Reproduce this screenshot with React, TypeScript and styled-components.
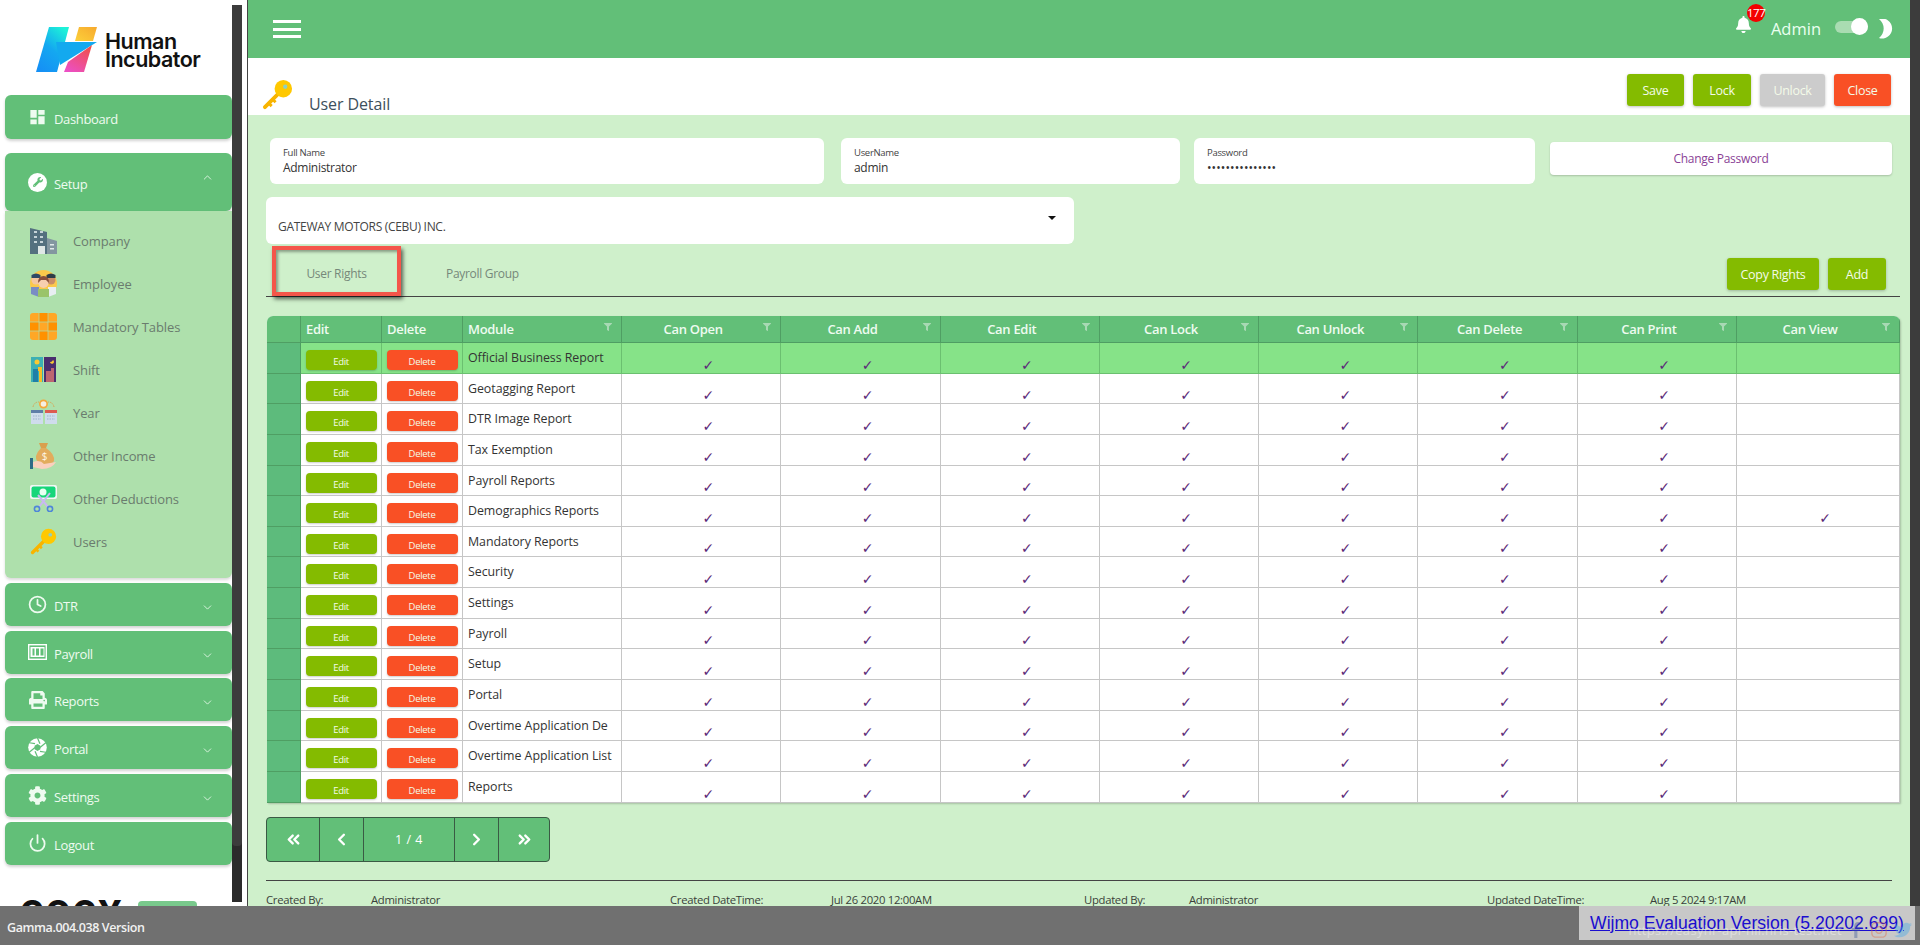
import * as React from 'react'
import styled, { createGlobalStyle } from 'styled-components'
import { MdDashboard } from 'react-icons/md'
import { FaWrench, FaPrint, FaCog, FaBell, FaFilter, FaFacebookF, FaInstagram, FaTwitter } from 'react-icons/fa'
import { ChevronDown, ChevronUp, Clock, Power, ChevronsLeft, ChevronsRight, ChevronLeft, ChevronRight } from 'lucide-react'

const GREEN = '#62bf78'
const LIME = '#84bb00'
const ORANGE = '#f95025'
const PALE = '#cff0cb'

const GlobalStyle = createGlobalStyle`
  html, body { margin: 0; padding: 0; height: 100%; overflow: hidden; background: #fff; }
  * { box-sizing: border-box; }
  body { font-family: "Open Sans", "Noto Sans", sans-serif; letter-spacing: -0.3px; }
`

const Page = styled.div`
  display: flex;
  width: 1920px;
  height: 945px;
  overflow: hidden;
`

const Sidebar = styled.aside`
  width: 248px;
  height: 906px;
  display: flex;
  flex: none;
  border-right: 1px solid #444;
  background: #fff;
`

const SideNav = styled.nav`
  width: 232px;
  padding-left: 5px;
  overflow: hidden;
`

const SideScroll = styled.div`
  width: 10px;
  height: 897px;
  margin-top: 5px;
  background: #2b2b2b;
`

const SideThumb = styled.div`
  height: 841px;
  background: #3c3c3c;
  border-radius: 0 0 4px 4px;
`

const LogoBlock = styled.div`
  height: 95px;
  display: flex;
  padding: 27px 0 0 30px;
  gap: 8px;
`

const LogoText = styled.div`
  font-family: Inter, "Open Sans", sans-serif;
  font-weight: 600;
  font-size: 21.5px;
  line-height: 18px;
  letter-spacing: -0.5px;
  color: #111;
  padding-top: 5px;
`

const MenuButton = styled.div<{ $h?: number; $mt?: number }>`
  height: ${({ $h }) => $h ?? 43}px;
  margin-top: ${({ $mt }) => $mt ?? 4.8}px;
  background: ${GREEN};
  border-radius: 6px;
  box-shadow: 0 2px 3px rgba(0, 0, 0, 0.18);
  color: #eefbf0;
  display: flex;
  align-items: center;
  padding: 0 18px 0 23px;
  font-size: 13px;
  letter-spacing: -0.35px;
`

const MenuIcon = styled.span`
  width: 19px;
  height: 19px;
  margin-right: 7px;
  display: flex;
  align-items: center;
  justify-content: center;
  flex: none;
`

const MenuLabel = styled.span`
  flex: 1;
  padding-top: 3px;
`

const ChevronWrap = styled.span<{ $shift: number }>`
  display: flex;
  margin-top: ${({ $shift }) => $shift}px;
`

const WrenchDisc = styled.span`
  width: 19px;
  height: 19px;
  border-radius: 50%;
  background: #fff;
  color: ${GREEN};
  display: flex;
  align-items: center;
  justify-content: center;
`

const SubMenu = styled.div`
  height: 367px;
  padding-top: 8px;
  background: #aee0ac;
  border-radius: 0 0 6px 6px;
  box-shadow: 0 2px 3px rgba(0, 0, 0, 0.15);
`

const SubItem = styled.div`
  height: 43px;
  display: flex;
  align-items: center;
  padding-left: 25px;
  font-size: 13px;
  letter-spacing: -0.1px;
  color: #6a7c6e;
`

const SubIcon = styled.span`
  width: 27px;
  height: 27px;
  margin-right: 16px;
  display: flex;
`

const Cutoff = styled.div`
  margin-top: 36px;
  margin-left: 15px;
  display: flex;
  align-items: flex-start;
`

const CutoffText = styled.span`
  width: 118px;
  font-family: Inter, sans-serif;
  font-weight: 800;
  font-size: 32px;
  line-height: 23px;
  letter-spacing: 2px;
  color: #111;
`

const CutoffPill = styled.span`
  width: 59px;
  height: 24px;
  border-radius: 4px;
  background: #79c98c;
`

const Main = styled.main`
  width: 1662px;
  flex: none;
  height: 945px;
  background: ${PALE};
  overflow: hidden;
`

const TopBar = styled.header`
  height: 58px;
  background: ${GREEN};
  display: flex;
  align-items: center;
  justify-content: space-between;
  padding: 0 17px 0 25px;
`

const Burger = styled.div`
  width: 28px;
  height: 18px;
  display: flex;
  flex-direction: column;
  justify-content: space-between;
`

const BurgerLine = styled.span`
  height: 3px;
  background: #fff;
`

const TopRight = styled.div`
  display: flex;
  align-items: center;
  color: #eafff0;
`

const BellWrap = styled.span`
  position: relative;
  display: flex;
  margin-right: 19px;
  margin-top: -10px;
  color: #fff;
`

const Badge = styled.span`
  position: absolute;
  left: 12px;
  top: -12px;
  width: 18px;
  height: 18px;
  border-radius: 50%;
  background: #f40000;
  color: #fff;
  font-size: 11.5px;
  line-height: 18px;
  text-align: center;
  letter-spacing: -0.4px;
`

const AdminName = styled.span`
  font-size: 16.5px;
  letter-spacing: 0;
  margin-right: 14px;
  margin-top: -1px;
`

const Toggle = styled.span`
  position: relative;
  width: 33px;
  height: 12px;
  border-radius: 6px;
  background: #a9dcb2;
  margin-right: 9px;
  margin-top: -4px;
`

const ToggleKnob = styled.span`
  position: absolute;
  right: 0;
  top: -3px;
  width: 17px;
  height: 17px;
  border-radius: 50%;
  background: #fff;
`

const PageHead = styled.div`
  height: 57px;
  background: #fff;
  display: flex;
  justify-content: space-between;
  padding: 16px 19px 0 14px;
`

const PageTitle = styled.div`
  display: flex;
  align-items: flex-end;
  gap: 16px;
  height: 36px;
  font-size: 16px;
  color: #3d4f5c;
  letter-spacing: -0.1px;
`

const TitleText = styled.span`
  line-height: 23px;
  margin-bottom: -6px;
`

const ActionRow = styled.div`
  display: flex;
  gap: 9px;
`

const ActionButton = styled.div<{ $bg?: string; $w: number }>`
  width: ${({ $w }) => $w}px;
  height: 32px;
  border-radius: 3px;
  background: ${({ $bg }) => $bg ?? LIME};
  color: #f4fbe9;
  font-size: 12.5px;
  display: flex;
  align-items: center;
  justify-content: center;
  box-shadow: 0 1px 3px rgba(0, 0, 0, 0.25);
`

const Content = styled.div`
  padding: 23px 10px 0 18px;
`

const FieldRow = styled.div`
  display: flex;
  padding-left: 4px;
`

const Field = styled.div<{ $w: number; $ml?: number }>`
  width: ${({ $w }) => $w}px;
  height: 46px;
  margin-left: ${({ $ml }) => $ml ?? 0}px;
  background: #fff;
  border-radius: 6px;
  padding: 9px 13px 0;
`

const FieldLabel = styled.div`
  font-size: 9.5px;
  line-height: 12px;
  color: #444;
`

const FieldValue = styled.div<{ $dots?: boolean }>`
  font-size: 12px;
  line-height: 17px;
  letter-spacing: ${({ $dots }) => ($dots ? '0.1px' : '-0.3px')};
  color: #333;
`

const ChangePassword = styled.div`
  width: 342px;
  height: 33px;
  margin: 4px 0 0 15px;
  background: #fff;
  border-radius: 4px;
  box-shadow: 0 1px 2px rgba(0, 0, 0, 0.2);
  color: #8a3f96;
  font-size: 12px;
  display: flex;
  align-items: center;
  justify-content: center;
`

const SelectBox = styled.div`
  position: relative;
  width: 808px;
  height: 47px;
  margin-top: 13px;
  background: #fff;
  border-radius: 6px;
  display: flex;
  align-items: flex-end;
  padding: 0 12px 9px;
  font-size: 12px;
  color: #444;
`

const SelectArrow = styled.span`
  position: absolute;
  right: 18px;
  top: 19px;
  border-left: 4px solid transparent;
  border-right: 4px solid transparent;
  border-top: 4px solid #111;
`

const TabRow = styled.div`
  height: 53px;
  display: flex;
  border-bottom: 1px solid #444;
  padding: 2px 14px 0 6px;
`

const ActiveTab = styled.div`
  width: 129px;
  height: 50px;
  padding-top: 5px;
  border: 4px solid #f4564a;
  box-shadow: 2px 3px 4px rgba(0, 0, 0, 0.6), inset 2px 2px 3px rgba(0, 0, 0, 0.35);
  display: flex;
  align-items: center;
  justify-content: center;
  font-size: 12px;
  color: #76887a;
`

const PlainTab = styled.div`
  margin-left: 45px;
  height: 50px;
  padding-top: 5px;
  display: flex;
  align-items: center;
  font-size: 12px;
  color: #76887a;
`

const TabActions = styled.div`
  margin-left: auto;
  padding-top: 12px;
  display: flex;
  gap: 9px;
`

const Grid = styled.div`
  margin: 19px 0 0 1px;
  width: 1633px;
  border-radius: 6px 6px 0 0;
  overflow: hidden;
  background: #fff;
  box-shadow: 1px 1px 2px rgba(0, 0, 0, 0.2);
`

const gridColumns = '34px 81px 81px 159px repeat(7, 159.3px) 1fr'

const HeadRow = styled.div`
  display: grid;
  grid-template-columns: ${gridColumns};
  height: 27px;
  background: ${GREEN};
  border-bottom: 1px solid #4f9e63;
`

const HeadCell = styled.div<{ $center?: boolean }>`
  position: relative;
  display: flex;
  align-items: center;
  justify-content: ${({ $center }) => ($center ? 'center' : 'flex-start')};
  padding: ${({ $center }) => ($center ? '0 16px 0 0' : '0 0 0 5px')};
  border-right: 1px solid #4f9e63;
  font-size: 13px;
  font-weight: 600;
  color: #eefbf0;
`

const FilterMark = styled.span`
  position: absolute;
  right: 9px;
  top: 7px;
  display: flex;
  color: #a8d9b4;
`

const DataRow = styled.div<{ $selected?: boolean }>`
  display: grid;
  grid-template-columns: ${gridColumns};
  height: 30.65px;
  background: ${({ $selected }) => ($selected ? '#86e388' : '#fff')};
  color: #333;
`

const StubCell = styled.div`
  background: #5dbb7c;
  border-right: 1px solid #4f9e63;
  border-bottom: 1px solid #4f9e63;
`

const ButtonCell = styled.div<{ $selected?: boolean }>`
  display: flex;
  justify-content: center;
  padding-top: 7px;
  border-right: 1px solid ${({ $selected }) => ($selected ? '#6bc070' : '#c6c6c6')};
  border-bottom: 1px solid ${({ $selected }) => ($selected ? '#6bc070' : '#c6c6c6')};
`

const RowButton = styled.div<{ $bg: string }>`
  width: 71px;
  height: 20px;
  border-radius: 4px;
  background: ${({ $bg }) => $bg};
  color: #f4fbe9;
  font-size: 9.5px;
  line-height: 23px;
  text-align: center;
  box-shadow: 0 1px 2px rgba(0, 0, 0, 0.2);
`

const ModuleCell = styled.div<{ $selected?: boolean }>`
  padding: 5px 0 0 5px;
  font-size: 12.4px;
  line-height: 20px;
  letter-spacing: -0.05px;
  white-space: nowrap;
  overflow: hidden;
  border-right: 1px solid ${({ $selected }) => ($selected ? '#6bc070' : '#c6c6c6')};
  border-bottom: 1px solid ${({ $selected }) => ($selected ? '#6bc070' : '#c6c6c6')};
`

const CheckCell = styled.div<{ $selected?: boolean }>`
  display: flex;
  justify-content: center;
  align-items: flex-end;
  padding-left: 14px;
  font-family: "DejaVu Sans", sans-serif;
  font-size: 14px;
  line-height: 15px;
  color: #5b2a78;
  border-right: 1px solid ${({ $selected }) => ($selected ? '#6bc070' : '#c6c6c6')};
  border-bottom: 1px solid ${({ $selected }) => ($selected ? '#6bc070' : '#c6c6c6')};
`

const Pager = styled.div`
  margin-top: 14px;
  width: 284px;
  height: 45px;
  display: flex;
  background: ${GREEN};
  border: 1px solid #3a5a44;
  border-radius: 4px;
  color: #fff;
`

const PagerCell = styled.div<{ $w: number }>`
  width: ${({ $w }) => $w}px;
  display: flex;
  align-items: center;
  justify-content: center;
  font-size: 12.5px;
  letter-spacing: 0.5px;
  border-right: 1px solid #3a5a44;
  &:last-child { border-right: 0; }
`

const FooterRule = styled.div`
  margin-top: 18px;
  width: 1626px;
  border-top: 1px solid #444;
`

const AuditRow = styled.div`
  display: grid;
  grid-template-columns: 105px 299px 161px 253px 105px 298px 163px 1fr;
  padding-top: 11px;
  font-size: 11.3px;
  line-height: 16px;
  color: #3a3f3a;
`

const RightScroll = styled.div`
  width: 10px;
  flex: none;
  height: 945px;
  background: #3c3c3c;
`

const BottomBar = styled.footer`
  position: fixed;
  left: 0;
  right: 0;
  bottom: 0;
  height: 39px;
  background: #707070;
  color: #f2f2f2;
  display: flex;
  align-items: center;
  justify-content: space-between;
  padding: 3px 8px 0 7px;
  font-size: 12.5px;
  font-weight: 600;
  letter-spacing: -0.4px;
`

const SiteLinks = styled.div`
  position: relative;
  z-index: 1;
  display: flex;
  align-items: center;
  gap: 6px;
  font-weight: 400;
  font-size: 13px;
  letter-spacing: 0.3px;
  color: #fff;
  padding-top: 6px;
  opacity: 0.4;
`

const SocialRow = styled.span<{ $c: string }>`
  display: flex;
  color: ${({ $c }) => $c};
`

const WijmoTag = styled.a`
  position: absolute;
  left: 1579px;
  top: 0;
  width: 336px;
  height: 34px;
  background: #c8c8c8;
  color: #1a0dcf;
  font-family: "Liberation Sans", Arial, sans-serif;
  font-size: 17.6px;
  font-weight: 400;
  letter-spacing: 0;
  line-height: 34px;
  text-align: center;
  text-decoration: underline;
`

const KeyIcon = ({ size }: { size: number }) => (
  <svg width={size} height={size} viewBox="0 0 32 32">
    <path d="M19 13 L3 29" stroke="#f8b400" strokeWidth="4" strokeLinecap="round" />
    <path d="M7 25 l3 3 M11 21 l3 3" stroke="#f8b400" strokeWidth="3" />
    <circle cx="22" cy="10" r="9" fill="#ffc800" />
    <circle cx="24" cy="8" r="2.2" fill="#8fd0c0" />
  </svg>
)

const CompanyIcon = () => (
  <svg width="27" height="27" viewBox="0 0 27 27">
    <path d="M0 1 L17 5 V27 H0 Z" fill="#54707f" />
    <path d="M17 11 L27 14 V27 H17 Z" fill="#8396a0" />
    <rect x="8" y="19" width="7" height="8" fill="#dfe7e6" />
    {[4, 9, 14].map(y => (
      <g key={y} fill="#c6d3d8">
        <rect x="4" y={y} width="3" height="2" />
        <rect x="10" y={y} width="3" height="2" />
      </g>
    ))}
    <rect x="20" y="17" width="4" height="1.5" fill="#e2e9ea" />
    <rect x="20" y="21" width="4" height="1.5" fill="#e2e9ea" />
  </svg>
)

const EmployeeIcon = () => (
  <svg width="27" height="27" viewBox="0 0 27 27">
    <circle cx="13.5" cy="13.5" r="13.5" fill="#fbc94b" />
    <path d="M1 24 V17 H9 V27 Z" fill="#7a8cc4" />
    <path d="M18 27 V17 H26 V24 Z" fill="#e8eef2" />
    <circle cx="6" cy="10" r="4.5" fill="#f4c7a0" />
    <path d="M1.5 8 V5 Q6 2 10.5 5 V8 Z" fill="#2f4a66" />
    <circle cx="21" cy="10" r="4.5" fill="#c98d67" />
    <path d="M16.5 8 V5 Q21 2 25.5 5 V8 Z" fill="#2e3c48" />
    <path d="M8 27 V19 H19 V27 Z" fill="#9ac46a" />
    <circle cx="13.5" cy="13" r="5" fill="#f7cfb0" />
    <path d="M8 13 Q8 6 13.5 6 Q19 6 19 13 L16 10 H11 Z" fill="#8a4f3a" />
  </svg>
)

const TablesIcon = () => (
  <svg width="27" height="27" viewBox="0 0 27 27">
    <rect width="27" height="27" rx="3" fill="#ffa726" />
    <rect x="9" width="9" height="9" fill="#ff9100" />
    <rect y="9" width="9" height="9" fill="#ff9100" />
    <rect x="18" y="9" width="9" height="9" fill="#ff9100" />
    <rect x="9" y="18" width="9" height="9" fill="#ff9100" />
    <path d="M9 0 V27 M18 0 V27 M0 9 H27 M0 18 H27" stroke="#aee0ac" strokeWidth="0.7" />
  </svg>
)

const ShiftIcon = () => (
  <svg width="27" height="27" viewBox="0 0 27 27">
    <rect x="1" y="1" width="12" height="25" fill="#3cb0b4" />
    <rect x="14" y="1" width="12" height="25" fill="#4a2e6e" />
    <circle cx="7" cy="6" r="2.5" fill="#f9c932" />
    <path d="M20 6 a2 2 0 1 0 3 -2 a3 3 0 0 1 -3 2 Z" fill="#f9c932" />
    <rect x="3" y="13" width="5" height="13" fill="#1f7fa8" />
    <path d="M8 11 H12 V26 H9 V15 H8 Z" fill="#f6bd27" />
    <path d="M16 26 V15 H21 V12 H24 V26 Z" fill="#bd6670" />
  </svg>
)

const YearIcon = () => (
  <svg width="27" height="27" viewBox="0 0 27 27">
    <path d="M3 8 Q4 3 9 3 M24 8 Q23 3 18 3" fill="none" stroke="#d8a555" strokeDasharray="1.5 1" />
    <circle cx="13.5" cy="5" r="4.5" fill="#f3a93c" />
    <circle cx="13.5" cy="5" r="2.8" fill="#f6efe2" />
    <rect x="1" y="11" width="12" height="14" fill="#cfdcec" />
    <rect x="1" y="11" width="12" height="3" fill="#5f7ea8" />
    <rect x="15" y="11" width="12" height="14" fill="#cfdcec" />
    <rect x="15" y="11" width="12" height="3" fill="#dd5a50" />
    <path d="M3 17 H11 M3 20 H11 M17 17 H25 M17 20 H25" stroke="#9fb3cc" strokeDasharray="1.5 1" />
  </svg>
)

const IncomeIcon = () => (
  <svg width="27" height="27" viewBox="0 0 27 27">
    <path d="M9 1 H18 L16 6 H11 Z" fill="#d9a04e" />
    <path d="M11 6 H16 Q25 12 24 19 Q22 23 13 22 Q5 20 6 14 Q7 10 11 6 Z" fill="#e2ac5d" />
    <text x="14.5" y="18" textAnchor="middle" fontSize="10" fill="#fff6e6" fontFamily="Open Sans">$</text>
    <path d="M3 20 Q10 17 14 22 L26 20 Q22 27 12 27 L3 25 Z" fill="#fbd0be" />
    <rect x="0" y="16" width="3" height="11" fill="#2f6b86" />
  </svg>
)

const DeductionIcon = () => (
  <svg width="27" height="27" viewBox="0 0 27 27">
    <rect x="0" y="0" width="27" height="14" rx="2" fill="#f3f7f6" />
    <rect x="1.5" y="1.5" width="24" height="11" rx="2" fill="#17d67a" />
    <circle cx="13" cy="7" r="3.5" fill="#e8fff3" />
    <path d="M20 8 L9 22 M8 10 L18 22" stroke="#c9b8f2" strokeWidth="2" />
    <circle cx="7" cy="24" r="2.6" fill="none" stroke="#4f86d8" strokeWidth="1.6" />
    <circle cx="20" cy="24" r="2.6" fill="none" stroke="#4f86d8" strokeWidth="1.6" />
  </svg>
)

const BanknoteIcon = () => (
  <svg width="19" height="16" viewBox="0 0 19 16">
    <rect x="0.7" y="0.7" width="17.6" height="14.6" fill="none" stroke="#fff" strokeWidth="1.4" />
    <rect x="2.5" y="3" width="14" height="10" fill="#fff" />
    <rect x="4.5" y="4.5" width="2" height="7" fill={GREEN} />
    <rect x="8" y="4.5" width="3" height="7" fill={GREEN} />
    <rect x="12.5" y="4.5" width="3" height="7" fill={GREEN} />
  </svg>
)

const ApertureIcon = () => (
  <svg width="19" height="19" viewBox="0 0 20 20">
    <circle cx="10" cy="10" r="9.8" fill="#fff" />
    <path d="M10 0 L12.6 6 M18.7 5 L12.6 10 M18.7 15 L12.6 14 M10 20 L7.4 14 M1.3 15 L7.4 10 M1.3 5 L7.4 6" stroke={GREEN} strokeWidth="1.3" />
    <path d="M10 6.4 L13.1 8.2 V11.8 L10 13.6 L6.9 11.8 V8.2 Z" fill={GREEN} />
  </svg>
)

const HumanLogo = () => (
  <svg width="62" height="46" viewBox="0 0 62 46">
    <defs>
      <linearGradient id="logoBlue" x1="0.8" y1="0" x2="0.2" y2="1">
        <stop offset="0" stopColor="#1df3d8" />
        <stop offset="0.5" stopColor="#14a8f0" />
        <stop offset="1" stopColor="#1590f5" />
      </linearGradient>
      <linearGradient id="logoPink" x1="0.8" y1="0" x2="0.2" y2="1">
        <stop offset="0" stopColor="#f0504a" />
        <stop offset="1" stopColor="#ec4fc4" />
      </linearGradient>
      <linearGradient id="logoGold" x1="1" y1="0" x2="0" y2="1">
        <stop offset="0" stopColor="#f7a92e" />
        <stop offset="1" stopColor="#fcd13a" />
      </linearGradient>
    </defs>
    <path d="M14 0 H34 L22 45 H1 Z" fill="url(#logoBlue)" />
    <path d="M21 15 H62 L25 38 Z" fill="#13a9ef" />
    <path d="M44 0 H62 L58 14 H40 Z" fill="url(#logoGold)" />
    <path d="M57 18 L49 45 H29 L33 35 Z" fill="url(#logoPink)" />
  </svg>
)

const MoonIcon = () => (
  <svg width="16" height="20" viewBox="0 0 16 20">
    <path d="M2 0 A10 10 0 1 1 2 19 A12 12 0 0 0 2 0 Z" fill="#fff" />
  </svg>
)

const subItems: [string, React.ReactNode][] = [
  ['Company', <CompanyIcon />],
  ['Employee', <EmployeeIcon />],
  ['Mandatory Tables', <TablesIcon />],
  ['Shift', <ShiftIcon />],
  ['Year', <YearIcon />],
  ['Other Income', <IncomeIcon />],
  ['Other Deductions', <DeductionIcon />],
  ['Users', <KeyIcon size={27} />],
]

const menuItems: [string, React.ReactNode][] = [
  ['DTR', <Clock size={19} strokeWidth={2.2} />],
  ['Payroll', <BanknoteIcon />],
  ['Reports', <FaPrint size={18} />],
  ['Portal', <ApertureIcon />],
  ['Settings', <FaCog size={19} />],
]

const modules = [
  'Official Business Report',
  'Geotagging Report',
  'DTR Image Report',
  'Tax Exemption',
  'Payroll Reports',
  'Demographics Reports',
  'Mandatory Reports',
  'Security',
  'Settings',
  'Payroll',
  'Setup',
  'Portal',
  'Overtime Application De',
  'Overtime Application List',
  'Reports',
]

const rights = ['Can Open', 'Can Add', 'Can Edit', 'Can Lock', 'Can Unlock', 'Can Delete', 'Can Print', 'Can View']

const App = () => (
  <Page>
    <GlobalStyle />
    <Sidebar>
      <SideNav>
        <LogoBlock>
          <HumanLogo />
          <LogoText>Human<br />Incubator</LogoText>
        </LogoBlock>
        <MenuButton $h={44} $mt={0}>
          <MenuIcon><MdDashboard size={24} /></MenuIcon>
          <MenuLabel>Dashboard</MenuLabel>
        </MenuButton>
        <MenuButton $h={58} $mt={14}>
          <MenuIcon><WrenchDisc><FaWrench size={10} /></WrenchDisc></MenuIcon>
          <MenuLabel>Setup</MenuLabel>
          <ChevronWrap $shift={-10}><ChevronUp size={13} strokeWidth={1.5} /></ChevronWrap>
        </MenuButton>
        <SubMenu>
          {subItems.map(([label, icon]) => (
            <SubItem key={label}>
              <SubIcon>{icon}</SubIcon>
              {label}
            </SubItem>
          ))}
        </SubMenu>
        {menuItems.map(([label, icon]) => (
          <MenuButton key={label}>
            <MenuIcon>{icon}</MenuIcon>
            <MenuLabel>{label}</MenuLabel>
            <ChevronWrap $shift={6}><ChevronDown size={13} strokeWidth={1.5} /></ChevronWrap>
          </MenuButton>
        ))}
        <MenuButton>
          <MenuIcon><Power size={20} strokeWidth={2.2} /></MenuIcon>
          <MenuLabel>Logout</MenuLabel>
        </MenuButton>
        <Cutoff>
          <CutoffText>COGY</CutoffText>
          <CutoffPill />
        </Cutoff>
      </SideNav>
      <SideScroll><SideThumb /></SideScroll>
    </Sidebar>

    <Main>
      <TopBar>
        <Burger><BurgerLine /><BurgerLine /><BurgerLine /></Burger>
        <TopRight>
          <BellWrap>
            <FaBell size={17} />
            <Badge>177</Badge>
          </BellWrap>
          <AdminName>Admin</AdminName>
          <Toggle><ToggleKnob /></Toggle>
          <MoonIcon />
        </TopRight>
      </TopBar>

      <PageHead>
        <PageTitle>
          <KeyIcon size={31} />
          <TitleText>User Detail</TitleText>
        </PageTitle>
        <ActionRow>
          <ActionButton $w={57}>Save</ActionButton>
          <ActionButton $w={58}>Lock</ActionButton>
          <ActionButton $w={65} $bg="#cccccc">Unlock</ActionButton>
          <ActionButton $w={57} $bg={ORANGE}>Close</ActionButton>
        </ActionRow>
      </PageHead>

      <Content>
        <FieldRow>
          <Field $w={554}>
            <FieldLabel>Full Name</FieldLabel>
            <FieldValue>Administrator</FieldValue>
          </Field>
          <Field $w={339} $ml={17}>
            <FieldLabel>UserName</FieldLabel>
            <FieldValue>admin</FieldValue>
          </Field>
          <Field $w={341} $ml={14}>
            <FieldLabel>Password</FieldLabel>
            <FieldValue $dots>•••••••••••••••</FieldValue>
          </Field>
          <ChangePassword>Change Password</ChangePassword>
        </FieldRow>

        <SelectBox>
          GATEWAY MOTORS (CEBU) INC.
          <SelectArrow />
        </SelectBox>

        <TabRow>
          <ActiveTab>User Rights</ActiveTab>
          <PlainTab>Payroll Group</PlainTab>
          <TabActions>
            <ActionButton $w={92}>Copy Rights</ActionButton>
            <ActionButton $w={58}>Add</ActionButton>
          </TabActions>
        </TabRow>

        <Grid>
          <HeadRow>
            <HeadCell />
            <HeadCell>Edit</HeadCell>
            <HeadCell>Delete</HeadCell>
            <HeadCell>
              Module
              <FilterMark><FaFilter size={8} /></FilterMark>
            </HeadCell>
            {rights.map(r => (
              <HeadCell key={r} $center>
                {r}
                <FilterMark><FaFilter size={8} /></FilterMark>
              </HeadCell>
            ))}
          </HeadRow>
          {modules.map((name, i) => {
            const selected = i === 0
            return (
              <DataRow key={name} $selected={selected}>
                <StubCell />
                <ButtonCell $selected={selected}><RowButton $bg={LIME}>Edit</RowButton></ButtonCell>
                <ButtonCell $selected={selected}><RowButton $bg={ORANGE}>Delete</RowButton></ButtonCell>
                <ModuleCell $selected={selected}>{name}</ModuleCell>
                {rights.map(r => (
                  <CheckCell key={r} $selected={selected}>
                    {r !== 'Can View' || name === 'Demographics Reports' ? '✓' : ''}
                  </CheckCell>
                ))}
              </DataRow>
            )
          })}
        </Grid>

        <Pager>
          <PagerCell $w={53}><ChevronsLeft size={19} strokeWidth={3} /></PagerCell>
          <PagerCell $w={44}><ChevronLeft size={19} strokeWidth={3} /></PagerCell>
          <PagerCell $w={91}>1 / 4</PagerCell>
          <PagerCell $w={44}><ChevronRight size={19} strokeWidth={3} /></PagerCell>
          <PagerCell $w={50}><ChevronsRight size={19} strokeWidth={3} /></PagerCell>
        </Pager>

        <FooterRule />
        <AuditRow>
          <span>Created By:</span>
          <span>Administrator</span>
          <span>Created DateTime:</span>
          <span>Jul 26 2020 12:00AM</span>
          <span>Updated By:</span>
          <span>Administrator</span>
          <span>Updated DateTime:</span>
          <span>Aug 5 2024 9:17AM</span>
        </AuditRow>
      </Content>
    </Main>
    <RightScroll />

    <BottomBar>
      <span>Gamma.004.038 Version</span>
      <WijmoTag>Wijmo Evaluation Version (5.20202.699)</WijmoTag>
      <SiteLinks>
        https://easyhr-api-hil.hris-test.net
        <SocialRow $c="#3b5998"><FaFacebookF size={16} /></SocialRow>
        <SocialRow $c="#e1663f"><FaInstagram size={18} /></SocialRow>
        <SocialRow $c="#45a8e8"><FaTwitter size={18} /></SocialRow>
      </SiteLinks>
    </BottomBar>
  </Page>
)

export default App
